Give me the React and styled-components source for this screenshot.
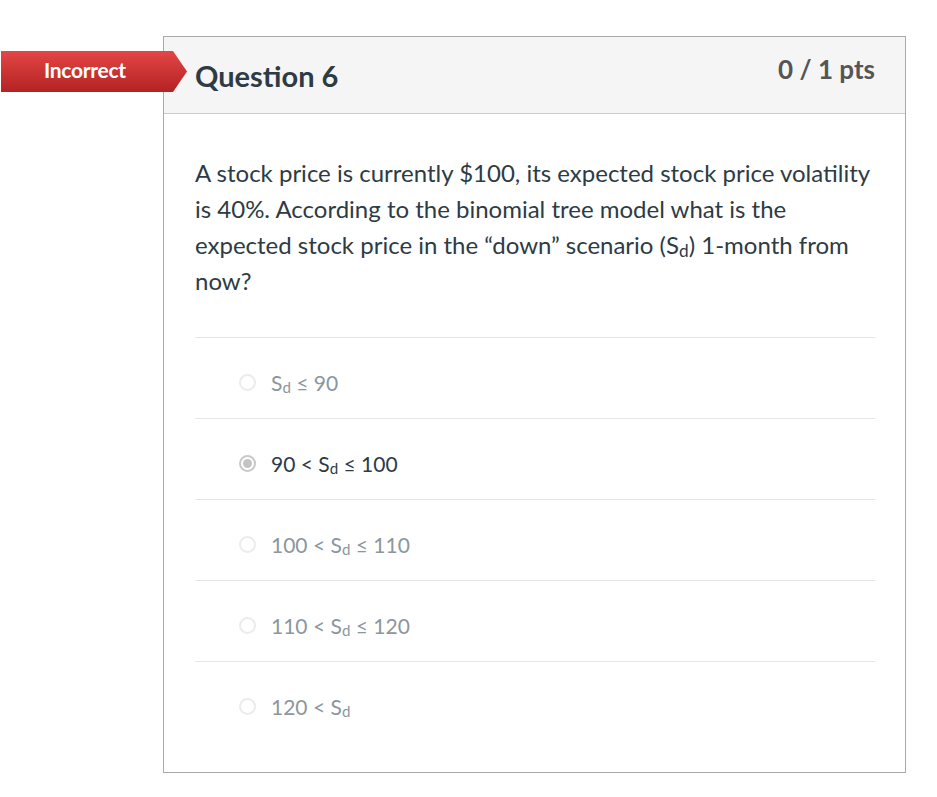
import React from "react";
import styled, { createGlobalStyle } from "styled-components";

const GlobalStyle = createGlobalStyle`
  body {
    margin: 0;
    background: #fff;
    font-family: Lato, "Open Sans", "Liberation Sans", sans-serif;
  }
`;

const Page = styled.div`
  position: relative;
  padding: 36px 0 24px 163px;
`;

const Banner = styled.div`
  position: absolute;
  left: 1px;
  top: 51px;
  width: 186px;
  height: 41px;
  background: linear-gradient(#e34646, #b42222);
  clip-path: polygon(0 0, 172px 0, 100% 50%, 172px 100%, 0 100%);
  color: #fff;
  font-weight: 700;
  font-size: 21px;
  display: flex;
  align-items: center;
  padding-left: 43px;
  padding-bottom: 4px;
  box-sizing: border-box;
  letter-spacing: -0.3px;
`;

const Card = styled.div`
  width: 743px;
  box-sizing: border-box;
  border: 1px solid #aaa;
  height: 737px;
`;

const Header = styled.div`
  display: flex;
  justify-content: space-between;
  background: #f5f5f5;
  border-bottom: 1px solid #c7cdd1;
  height: 77px;
  box-sizing: border-box;
  padding: 0 30px 0 31px;
`;

const Title = styled.h2`
  margin: 0;
  padding-top: 21px;
  font-size: 29px;
  font-weight: 700;
  color: #2d3b45;
  line-height: 36px;
`;

const Points = styled.div`
  padding-top: 16px;
  font-size: 26px;
  font-weight: 700;
  color: #555;
  line-height: 32px;
`;

const Body = styled.div`
  padding: 41px 30px 0 31px;
`;

const Prompt = styled.p`
  margin: 0 0 38px;
  font-size: 24px;
  line-height: 36px;
  color: #2d3b45;
`;

const Answer = styled.label`
  display: flex;
  align-items: center;
  gap: 15px;
  height: 72px;
  border-top: 1px solid #e3e5e7;
  padding: 8px 0 0 44px;
  box-sizing: content-box;
  font-size: 21px;
  color: ${(p) => (p.$selected ? "#2d3b45" : "#8b969e")};
`;

const Radio = styled.span`
  width: 17px;
  height: 17px;
  border-radius: 50%;
  box-sizing: border-box;
  flex-shrink: 0;
  border: 2px solid ${(p) => (p.$selected ? "#c9c9c9" : "#ececec")};
  background: #fff;
  display: flex;
  align-items: center;
  justify-content: center;

  &::after {
    content: "";
    display: ${(p) => (p.$selected ? "block" : "none")};
    width: 9px;
    height: 9px;
    border-radius: 50%;
    background: #c4c4c4;
  }
`;

const Sub = styled.sub`
  font-size: 0.72em;
  vertical-align: -0.15em;
  line-height: 0;
`;

const Sd = () => (
  <>
    S<Sub>d</Sub>
  </>
);

const answers = [
  { id: 1, text: <>
      <Sd /> ≤ 90
    </> },
  { id: 2, selected: true, text: <>
      90 &lt; <Sd /> ≤ 100
    </> },
  { id: 3, text: <>
      100 &lt; <Sd /> ≤ 110
    </> },
  { id: 4, text: <>
      110 &lt; <Sd /> ≤ 120
    </> },
  { id: 5, text: <>
      120 &lt; <Sd />
    </> },
];

export default function App() {
  return (
    <Page>
      <GlobalStyle />
      <Banner>Incorrect</Banner>
      <Card>
        <Header>
          <Title>Question 6</Title>
          <Points>0 / 1 pts</Points>
        </Header>
        <Body>
          <Prompt>
            A stock price is currently $100, its expected stock price volatility
            is 40%. According to the binomial tree model what is the expected
            stock price in the “down” scenario (S<Sub>d</Sub>) 1-month from now?
          </Prompt>
          {answers.map((a) => (
            <Answer key={a.id} $selected={a.selected}>
              <Radio $selected={a.selected} />
              <span>{a.text}</span>
            </Answer>
          ))}
        </Body>
      </Card>
    </Page>
  );
}
